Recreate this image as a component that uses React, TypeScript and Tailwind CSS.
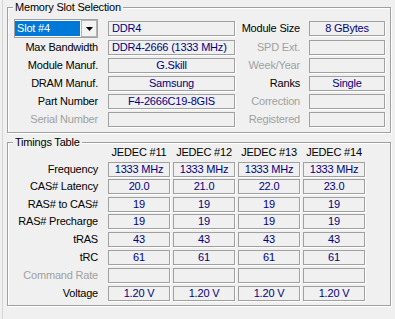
import React from "react";

type FProps = { children?: React.ReactNode; w: string; left?: boolean };

function Field({ children, w, left }: FProps) {
  return (
    <div
      className={`${w} h-[15px] shrink-0 border border-[#a0a0a0] shadow-[1px_1px_0_#ffffff] text-[#000080] leading-[13px] whitespace-nowrap overflow-hidden flex items-center ${
        left ? "justify-start pl-[3px]" : "justify-center"
      }`}
    >
      {children}
    </div>
  );
}

function Group({ title, h, children, cls }: { title: string; h: string; children: React.ReactNode; cls?: string }) {
  return (
    <div
      className={`relative w-[384px] ${h} ${cls ?? ""} border border-[#a0a0a0] shadow-[inset_1px_1px_0_#ffffff,1px_1px_0_#ffffff]`}
    >
      <div className="absolute left-[5px] top-[-7px] px-[2px] bg-[#f0f0f0] leading-[13px] text-black">{title}</div>
      {children}
    </div>
  );
}

const slotRows = [
  { label: "Max Bandwidth", value: "DDR4-2666 (1333 MHz)", left: true, rlabel: "SPD Ext.", rdis: true, rvalue: "" },
  { label: "Module Manuf.", value: "G.Skill", rlabel: "Week/Year", rdis: true, rvalue: "" },
  { label: "DRAM Manuf.", value: "Samsung", rlabel: "Ranks", rdis: false, rvalue: "Single" },
  { label: "Part Number", value: "F4-2666C19-8GIS", rlabel: "Correction", rdis: true, rvalue: "" },
  { label: "Serial Number", value: "", dis: true, rlabel: "Registered", rdis: true, rvalue: "" },
];

const timingRows = [
  { label: "Frequency", vals: ["1333 MHz", "1333 MHz", "1333 MHz", "1333 MHz"], mt: "mt-[3px]" },
  { label: "CAS# Latency", vals: ["20.0", "21.0", "22.0", "23.0"], mt: "mt-[2px]" },
  { label: "RAS# to CAS#", vals: ["19", "19", "19", "19"], mt: "mt-[3px]" },
  { label: "RAS# Precharge", vals: ["19", "19", "19", "19"], mt: "mt-[2px]" },
  { label: "tRAS", vals: ["43", "43", "43", "43"], mt: "mt-[3px]" },
  { label: "tRC", vals: ["61", "61", "61", "61"], mt: "mt-[3px]" },
  { label: "Command Rate", vals: ["", "", "", ""], mt: "mt-[3px]", dis: true },
  { label: "Voltage", vals: ["1.20 V", "1.20 V", "1.20 V", "1.20 V"], mt: "mt-[3px]" },
];

export default function App() {
  return (
    <div className="w-[395px] h-[319px] bg-[#f0f0f0] pl-[2px] overflow-hidden font-['Liberation_Sans',Arial,sans-serif] text-[11px] tracking-[-0.2px] text-black">
      <div className="h-full border-l border-[#d6d6d6] pl-[4px] pt-[7px]">
        <Group title="Memory Slot Selection" h="h-[126px]">
          <div className="pt-[11px] flex flex-col">
            <div className="flex items-center h-[19px]">
              <div className="w-[91px] shrink-0 pl-[6px]">
                <div className="w-[84px] h-[19px] border border-[#a0a0a0] bg-white flex">
                  <div className="w-[65px] h-[15px] mt-[1px] bg-[#0078d7] text-white leading-[15px] pl-[2px]">Slot #4</div>
                  <div className="ml-[1px] w-[16px] h-[17px] border border-[#b4b4b4] bg-[#f3f3f3] flex items-center justify-center">
                    <svg width="7" height="4" viewBox="0 0 7 4">
                      <polygon points="0,0 7,0 3.5,4" fill="#000" />
                    </svg>
                  </div>
                </div>
              </div>
              <div className="ml-[9px]">
                <Field w="w-[127px]" left>
                  DDR4
                </Field>
              </div>
              <div className="w-[65px] shrink-0 text-right leading-[13px]">Module Size</div>
              <div className="ml-[9px]">
                <Field w="w-[76px]">8 GBytes</Field>
              </div>
            </div>
            {slotRows.map((r, i) => (
              <div key={r.label} className={`flex items-center h-[15px] ${i === 0 ? "mt-[2px]" : "mt-[3px]"}`}>
                <div
                  className={`w-[91px] shrink-0 text-right pr-[1px] leading-[13px] ${
                    r.dis ? "text-[#a0a0a0]" : "text-black"
                  }`}
                >
                  {r.label}
                </div>
                <div className="ml-[9px]">
                  <Field w="w-[127px]" left={r.left}>
                    {r.value}
                  </Field>
                </div>
                <div
                  className={`w-[65px] shrink-0 text-right leading-[13px] ${
                    r.rdis ? "text-[#a0a0a0]" : "text-black"
                  }`}
                >
                  {r.rlabel}
                </div>
                <div className="ml-[9px]">
                  <Field w="w-[76px]">{r.rvalue}</Field>
                </div>
              </div>
            ))}
          </div>
        </Group>
        <Group title="Timings Table" h="h-[164px]" cls="mt-[9px]">
          <div className="pt-[3px] flex flex-col">
            <div className="flex h-[13px] leading-[13px]">
              <div className="w-[91px] shrink-0" />
              <div className="ml-[9px] flex gap-[3px]">
                {["JEDEC #11", "JEDEC #12", "JEDEC #13", "JEDEC #14"].map((t) => (
                  <div key={t} className="w-[62px] text-center whitespace-nowrap">
                    {t}
                  </div>
                ))}
              </div>
            </div>
            {timingRows.map((r) => (
              <div key={r.label} className={`flex items-center h-[15px] ${r.mt}`}>
                <div
                  className={`w-[91px] shrink-0 text-right pr-[1px] leading-[13px] whitespace-nowrap ${
                    r.dis ? "text-[#a0a0a0]" : "text-black"
                  }`}
                >
                  {r.label}
                </div>
                <div className="ml-[9px] flex gap-[3px]">
                  {r.vals.map((v, j) => (
                    <Field key={j} w="w-[62px]">
                      {v}
                    </Field>
                  ))}
                </div>
              </div>
            ))}
          </div>
        </Group>
      </div>
    </div>
  );
}
